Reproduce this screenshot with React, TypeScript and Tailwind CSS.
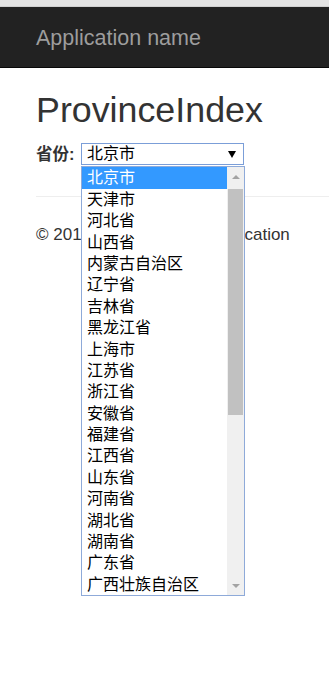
import React from "react";

const provinces: string[] = [
  "北京市",
  "天津市",
  "河北省",
  "山西省",
  "内蒙古自治区",
  "辽宁省",
  "吉林省",
  "黑龙江省",
  "上海市",
  "江苏省",
  "浙江省",
  "安徽省",
  "福建省",
  "江西省",
  "山东省",
  "河南省",
  "湖北省",
  "湖南省",
  "广东省",
  "广西壮族自治区",
];

const ProvinceDropdown: React.FC = () => {
  return (
    <div className="absolute left-[-1px] top-[22px] w-[164px] border border-[#8eaad9] bg-white flex z-10">
      <ul className="flex-1">
        {provinces.map((name, i) => (
          <li
            key={name}
            className={
              i === 0
                ? "h-[21.4px] leading-[21.4px] pl-[5px] text-[16px] bg-[#3399ff] text-white"
                : "h-[21.4px] leading-[21.4px] pl-[5px] text-[16px] text-black"
            }
          >
            {name}
          </li>
        ))}
      </ul>
      {/* scrollbar */}
      <div className="w-[17px] bg-[#f0f0f0] flex flex-col items-center">
        <div className="h-[19px] w-full flex items-center justify-center">
          <div className="w-0 h-0 border-x-[4px] border-x-transparent border-b-[4px] border-b-[#a3a3a3]" />
        </div>
        <div className="mt-[3px] h-[226px] w-[15px] bg-[#c1c1c1]" />
        <div className="flex-1" />
        <div className="h-[19px] w-full flex items-center justify-center">
          <div className="w-0 h-0 border-x-[4px] border-x-transparent border-t-[4px] border-t-[#a3a3a3]" />
        </div>
      </div>
    </div>
  );
};

export default function App() {
  return (
    <div className="min-h-[675px] bg-white text-[#333] font-['Liberation_Sans','Noto_Sans_CJK_SC',sans-serif]">
      <div className="h-[7px] bg-[#e3e3e3] border-b border-[#d0d0d0]" />
      <div className="h-[61px] bg-[#222] border-b border-[#080808] flex items-center px-[36px] pt-[3px]">
        <span className="text-[21.5px] text-[#9d9d9d] leading-none">Application name</span>
      </div>

      <div className="pl-[36px]">
        <h2 className="mt-[23px] text-[35.8px] leading-[1.1] text-[#333]">ProvinceIndex</h2>

        <div className="mt-[13px] flex items-center h-[22px]">
          <label className="font-bold text-[16.5px] w-[45px]">省份:</label>
          <div className="relative w-[163px] h-[22px] border border-[#7b9ed8] bg-white flex items-center">
            <span className="pl-[5px] text-[16px] text-black flex-1">北京市</span>
            <div className="mr-[7px] w-0 h-0 border-x-[4px] border-x-transparent border-t-[7px] border-t-black" />
            <ProvinceDropdown />
          </div>
        </div>

        <hr className="mt-[31px] border-t border-[#eeeeee]" />

        <footer className="mt-[28px]">
          <p className="text-[17px] leading-[20px]">© 2015 - My ASP.NET Application</p>
        </footer>
      </div>
    </div>
  );
}
